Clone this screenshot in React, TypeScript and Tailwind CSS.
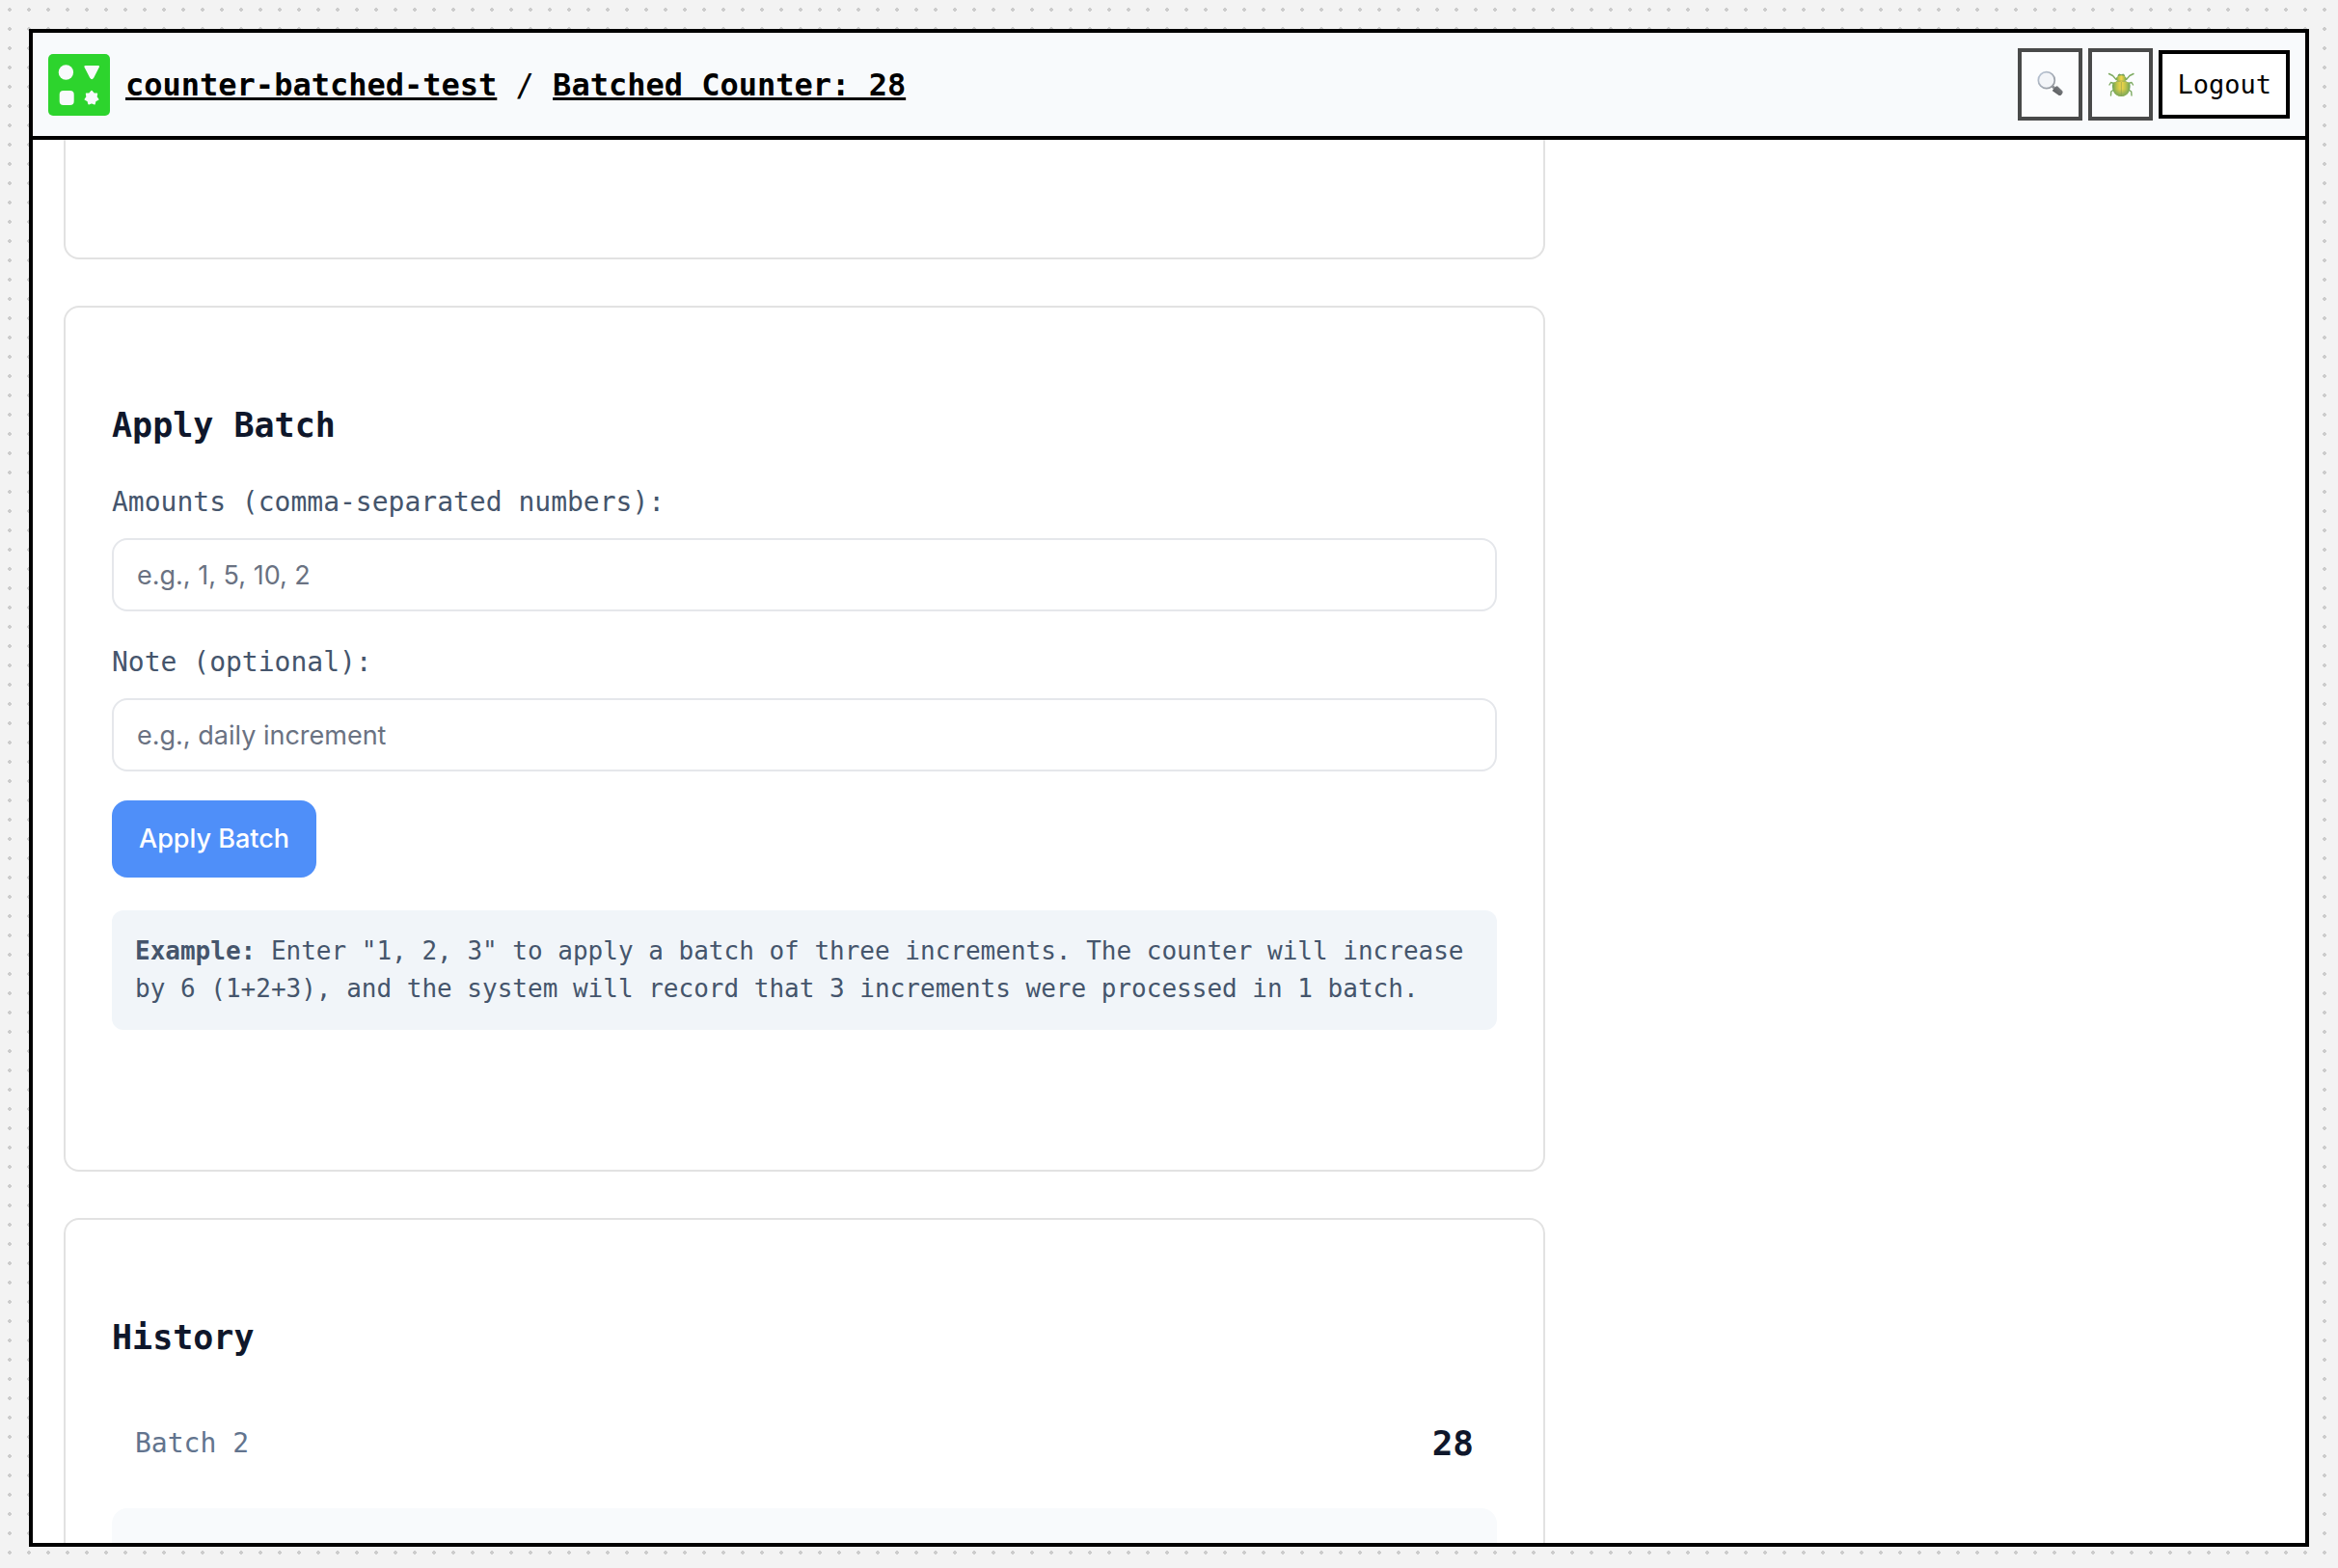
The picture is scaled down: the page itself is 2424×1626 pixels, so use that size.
import React from "react";

function Logo() {
  return (
    <svg viewBox="0 0 64 64" className="size-16 shrink-0" aria-hidden="true">
      <rect width="64" height="64" rx="5" fill="#2dd42d" />
      <g fill="#f8fafc">
        <circle cx="18.4" cy="19" r="7.7" />
        <path
          d="M38.300 13.100H52L46.300 24.300Q45.200 26 44.100 24.300Z"
          stroke="#f8fafc"
          strokeWidth="2"
          strokeLinejoin="round"
        />
        <rect x="11.7" y="38" width="15" height="15" rx="4" />
        <path
          d="M45 38.500L47.200 41L50.500 41.100L49.900 44.400L51.800 47.100L48.900 48.600L48 51.800L45 50.500L42 51.800L41.100 48.600L38.200 47.100L40.100 44.400L39.500 41.100L42.800 41Z"
          stroke="#f8fafc"
          strokeWidth="1.4"
          strokeLinejoin="round"
        />
      </g>
    </svg>
  );
}

function MagnifierIcon() {
  return (
    <svg viewBox="0 1 40 40" className="size-10" aria-hidden="true">
      <defs>
        <linearGradient id="rim" x1="0" y1="0" x2="1" y2="1">
          <stop offset="0" stopColor="#a3b4cb" />
          <stop offset="1" stopColor="#66696f" />
        </linearGradient>
        <linearGradient id="handle" x1="0" y1="1" x2="1" y2="0">
          <stop offset="0" stopColor="#0c0d0f" />
          <stop offset="0.6" stopColor="#34373b" />
          <stop offset="1" stopColor="#74787d" />
        </linearGradient>
      </defs>
      <path d="M21.500 22l3 3" stroke="#5f6267" strokeWidth="2.800" />
      <path
        d="M22.300 26.200l3.400-3.600q.8-.8 1.700 0l4.900 4.700q1 1.400-.3 3l-1 1.100q-1.500 1.300-3 .2l-5.700-4q-.8-.7 0-1.400z"
        fill="url(#handle)"
      />
      <circle cx="15.800" cy="16.200" r="8.500" fill="#f1f3f7" stroke="url(#rim)" strokeWidth="1.700" />
    </svg>
  );
}

function BeetleIcon() {
  return (
    <svg viewBox="0 1 40 40" className="size-10" aria-hidden="true">
      <defs>
        <linearGradient id="shell" x1="0" y1="0" x2="1" y2="0">
          <stop offset="0" stopColor="#2f7d12" />
          <stop offset="0.25" stopColor="#a3ac00" />
          <stop offset="0.5" stopColor="#f5c800" />
          <stop offset="0.75" stopColor="#a3ac00" />
          <stop offset="1" stopColor="#2f7d12" />
        </linearGradient>
        <linearGradient id="shade" x1="0" y1="0" x2="0" y2="1">
          <stop offset="0.5" stopColor="#2f7d1c" stopOpacity="0" />
          <stop offset="1" stopColor="#2f7d1c" stopOpacity="0.9" />
        </linearGradient>
      </defs>
      <g fill="none" stroke="#4a8a22" strokeWidth="1.400" strokeLinecap="round" strokeLinejoin="round">
        <path d="M7.500 9.500L11.500 11.500L15 15.500M33 9.500L29 11.500L25.500 15.500" />
        <path d="M8 21L9.500 18.500L13 19.500M32.500 21L31 18.500L27.500 19.500" />
        <path d="M9.500 32L9.800 28L12.500 26M31 32L30.700 28L28 26" />
      </g>
      <path d="M16.500 12q0-2 1.800-2.500l2 .8 2-.8q1.800.5 1.800 2.500z" fill="#3b7d14" />
      <ellipse cx="20.300" cy="14.700" rx="5.500" ry="3.500" fill="url(#shell)" />
      <path
        d="M20.300 17.500c4-.7 8 .2 9 2.200 1.400 6-2 13.300-9 13.300s-10.400-7.300-9-13.300c1-2 5-2.900 9-2.200z"
        fill="url(#shell)"
      />
      <path
        d="M20.300 17.500c4-.7 8 .2 9 2.200 1.400 6-2 13.300-9 13.300s-10.400-7.300-9-13.300c1-2 5-2.900 9-2.200z"
        fill="url(#shade)"
      />
      <path d="M20.300 18v14.500M15 17.600q5.300-1.300 10.600 0" fill="none" stroke="#5b7a08" strokeWidth="0.700" />
    </svg>
  );
}

function IconButton({ label, children }: { label: string; children: React.ReactNode }) {
  return (
    <button
      type="button"
      aria-label={label}
      className="flex h-[75px] w-[67px] items-center justify-center border-4 border-black bg-white opacity-70"
    >
      {children}
    </button>
  );
}

function Header() {
  return (
    <header className="flex shrink-0 items-center gap-4 border-b-4 border-black bg-slate-50 p-4">
      <Logo />
      <nav className="flex-1 whitespace-pre text-[32px] leading-10 text-black">
        <a href="#app" className="font-bold underline decoration-[3px]">counter-batched-test</a>
        {" / "}
        <a href="#counter" className="font-bold underline decoration-[3px]">Batched Counter: 28</a>
      </nav>
      <div className="flex items-center gap-1.5">
        <IconButton label="Search"><MagnifierIcon /></IconButton>
        <IconButton label="Debug"><BeetleIcon /></IconButton>
        <button
          type="button"
          className="h-[71px] border-4 border-black bg-white px-[15px] text-[27px] leading-8 text-black"
        >
          Logout
        </button>
      </div>
    </header>
  );
}

function Field({ id, label, placeholder }: { id: string; label: string; placeholder: string }) {
  return (
    <div className="flex flex-col gap-4">
      <label htmlFor={id} className="text-[28px] leading-[42px] text-slate-600">{label}</label>
      <input
        id={id}
        type="text"
        placeholder={placeholder}
        className="h-[76px] w-full rounded-2xl border-2 border-gray-200 bg-white px-6 font-[Inter,sans-serif] text-[27px] text-slate-900 placeholder:text-gray-500"
      />
    </div>
  );
}

function Card({ title, children }: { title: string; children: React.ReactNode }) {
  return (
    <section className="rounded-2xl border-2 border-[#e2e2e2] px-12 pt-24 pb-[145px]">
      <h2 className="mb-[33px] text-[35px] leading-[52px] font-bold text-slate-900">{title}</h2>
      {children}
    </section>
  );
}

export default function App() {
  return (
    <div className="h-screen bg-[#f3f3f3] bg-[radial-gradient(circle,#cccccc_2px,transparent_2px)] bg-[size:20px_20px] px-[30px] pt-[30px] pb-[22px] font-['DejaVu_Sans_Mono',monospace]">
      <div className="flex h-full flex-col border-4 border-black bg-white">
        <Header />
        <main className="flex min-h-0 flex-1 flex-col overflow-hidden px-8">
          <div className="flex w-full max-w-[1536px] flex-col gap-12">
            <section className="h-[124px] rounded-b-2xl border-2 border-t-0 border-[#e2e2e2]" />
            <Card title="Apply Batch">
              <form className="flex flex-col gap-[30px]">
                <div className="flex flex-col gap-8">
                  <Field id="amounts" label="Amounts (comma-separated numbers):" placeholder="e.g., 1, 5, 10, 2" />
                  <Field id="note" label="Note (optional):" placeholder="e.g., daily increment" />
                </div>
                <button
                  type="button"
                  className="h-20 self-start rounded-2xl bg-[#4f8ff9] px-7 font-[Inter,sans-serif] text-[27px] font-medium text-white"
                >
                  Apply Batch
                </button>
              </form>
              <p className="mt-[34px] rounded-xl bg-slate-100 px-6 py-[23px] text-[26px] leading-[39px] text-slate-600">
                <strong>Example:</strong> Enter "1, 2, 3" to apply a batch of three increments. The counter will
                increase by 6 (1+2+3), and the system will record that 3 increments were processed in 1 batch.
              </p>
            </Card>
            <Card title="History">
              <ul className="flex flex-col gap-4">
                <li className="flex items-center justify-between rounded-2xl p-6">
                  <span className="text-[28px] leading-[42px] text-slate-500">Batch 2</span>
                  <span className="text-[36px] leading-[54px] font-bold text-slate-900">28</span>
                </li>
                <li className="h-[102px] rounded-2xl bg-slate-50" />
              </ul>
            </Card>
          </div>
        </main>
      </div>
    </div>
  );
}
